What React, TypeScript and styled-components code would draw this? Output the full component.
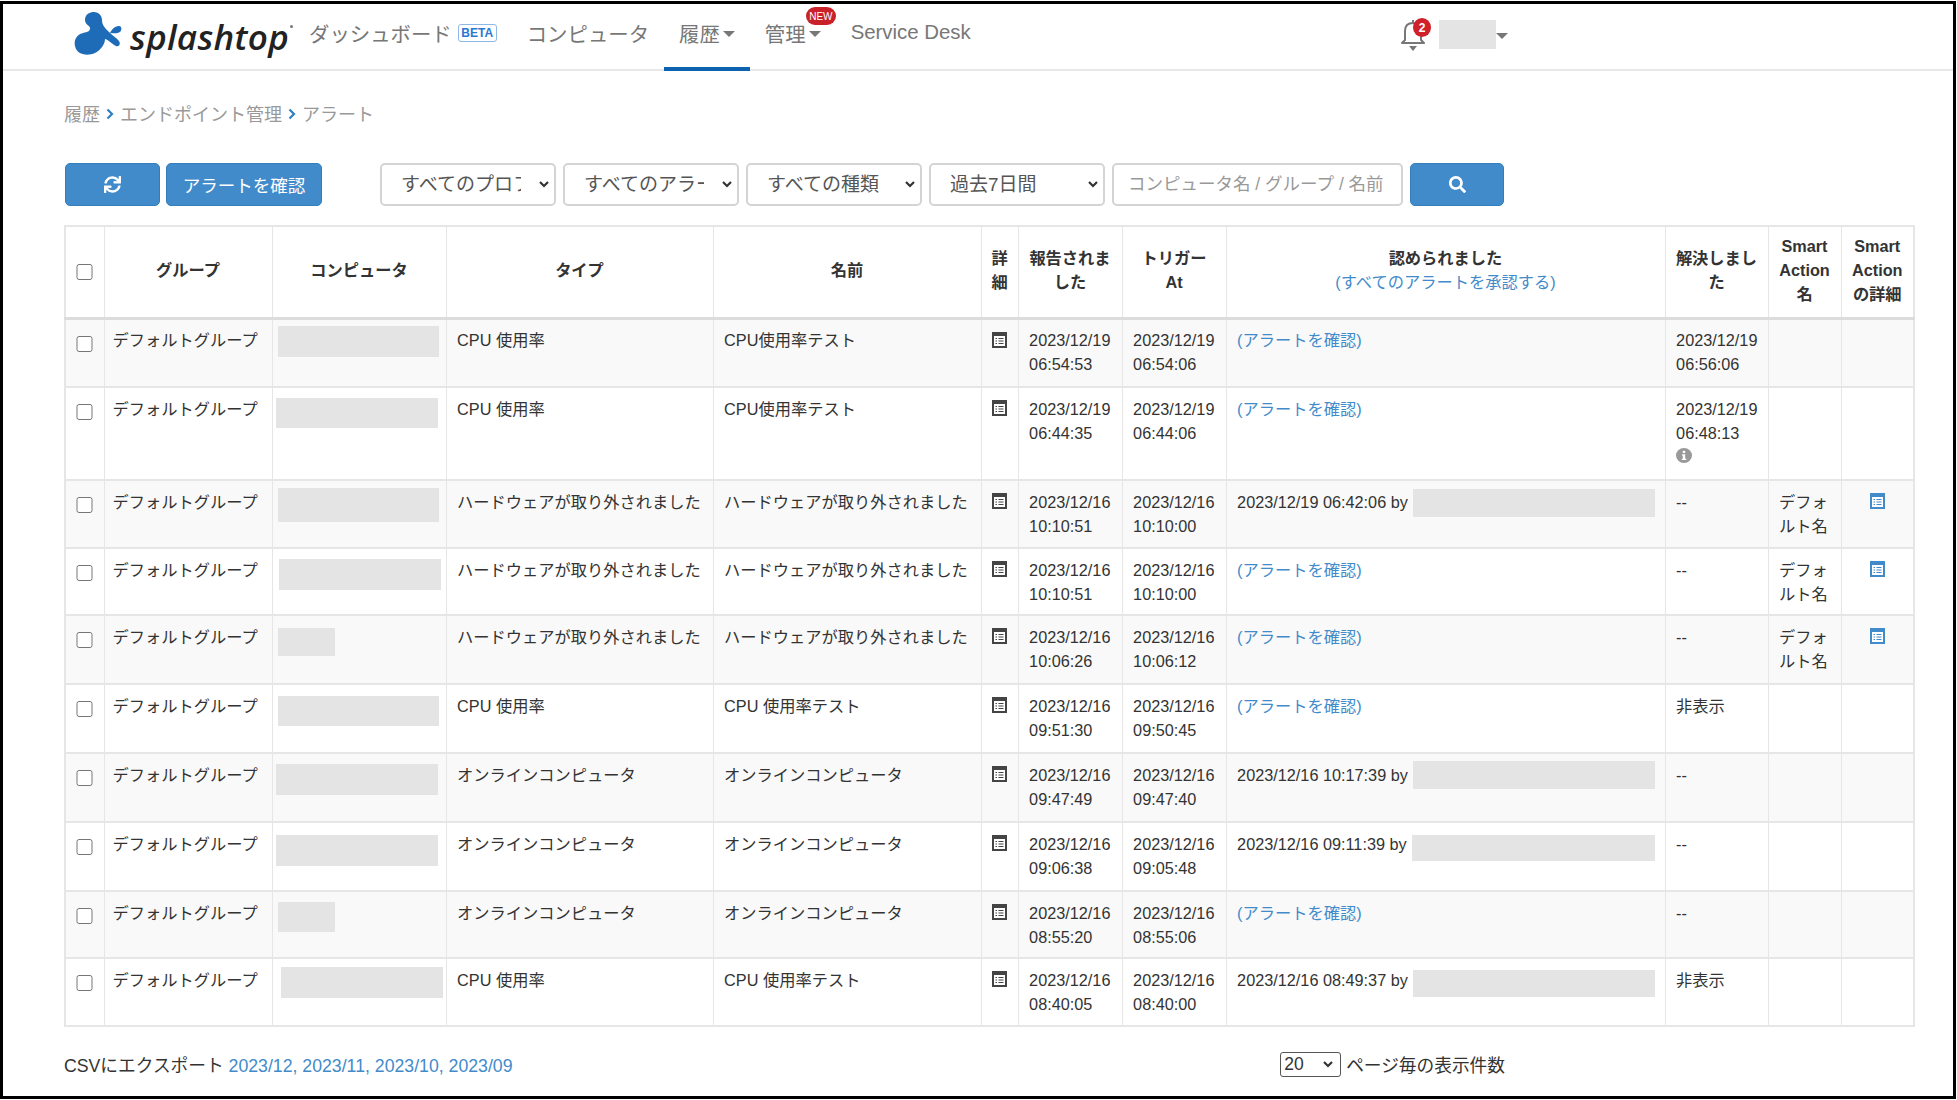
import { Fragment } from "react";
import styled, { createGlobalStyle } from "styled-components";
import { FaSearch, FaSync } from "react-icons/fa";

type Ack = { link: true } | { by: string; top: number; height: number };

interface AlertRow {
  height: number;
  box: { x: number; y: number; w: number; h: number };
  type: string;
  name: string;
  reported: string[];
  trigger: string[];
  ack: Ack;
  resolved: string[];
  info?: boolean;
  smart?: boolean;
}

const HW = "ハードウェアが取り外されました";
const ONLINE = "オンラインコンピュータ";

const rows: AlertRow[] = [
  { height: 69, box: { x: 5, y: 6, w: 161, h: 31 }, type: "CPU 使用率", name: "CPU使用率テスト", reported: ["2023/12/19", "06:54:53"], trigger: ["2023/12/19", "06:54:06"], ack: { link: true }, resolved: ["2023/12/19", "06:56:06"] },
  { height: 93, box: { x: 3, y: 10, w: 162, h: 30 }, type: "CPU 使用率", name: "CPU使用率テスト", reported: ["2023/12/19", "06:44:35"], trigger: ["2023/12/19", "06:44:06"], ack: { link: true }, resolved: ["2023/12/19", "06:48:13"], info: true },
  { height: 68, box: { x: 5, y: 7, w: 161, h: 34 }, type: HW, name: HW, reported: ["2023/12/16", "10:10:51"], trigger: ["2023/12/16", "10:10:00"], ack: { by: "2023/12/19 06:42:06 by", top: -1, height: 28 }, resolved: ["--"], smart: true },
  { height: 67, box: { x: 6, y: 10, w: 162, h: 31 }, type: HW, name: HW, reported: ["2023/12/16", "10:10:51"], trigger: ["2023/12/16", "10:10:00"], ack: { link: true }, resolved: ["--"], smart: true },
  { height: 69, box: { x: 5, y: 12, w: 57, h: 28 }, type: HW, name: HW, reported: ["2023/12/16", "10:06:26"], trigger: ["2023/12/16", "10:06:12"], ack: { link: true }, resolved: ["--"], smart: true },
  { height: 69, box: { x: 5, y: 11, w: 161, h: 30 }, type: "CPU 使用率", name: "CPU 使用率テスト", reported: ["2023/12/16", "09:51:30"], trigger: ["2023/12/16", "09:50:45"], ack: { link: true }, resolved: ["非表示"] },
  { height: 69, box: { x: 3, y: 10, w: 162, h: 31 }, type: ONLINE, name: ONLINE, reported: ["2023/12/16", "09:47:49"], trigger: ["2023/12/16", "09:47:40"], ack: { by: "2023/12/16 10:17:39 by", top: -2, height: 28 }, resolved: ["--"] },
  { height: 69, box: { x: 3, y: 12, w: 162, h: 31 }, type: ONLINE, name: ONLINE, reported: ["2023/12/16", "09:06:38"], trigger: ["2023/12/16", "09:05:48"], ack: { by: "2023/12/16 09:11:39 by", top: 3, height: 26 }, resolved: ["--"] },
  { height: 67, box: { x: 5, y: 10, w: 57, h: 30 }, type: ONLINE, name: ONLINE, reported: ["2023/12/16", "08:55:20"], trigger: ["2023/12/16", "08:55:06"], ack: { link: true }, resolved: ["--"] },
  { height: 68, box: { x: 8, y: 8, w: 162, h: 31 }, type: "CPU 使用率", name: "CPU 使用率テスト", reported: ["2023/12/16", "08:40:05"], trigger: ["2023/12/16", "08:40:00"], ack: { by: "2023/12/16 08:49:37 by", top: 2, height: 27 }, resolved: ["非表示"] },
];

const columns = [39, 168, 174, 267, 268, 37, 104, 104, 439, 103, 73, 73];
const exportMonths = ["2023/12", "2023/11", "2023/10", "2023/09"];

// select arrow, a bold chevron like the one in the picture
const ARROW = `url("data:image/svg+xml,%3Csvg xmlns='http://www.w3.org/2000/svg' width='10' height='7'%3E%3Cpath d='M1 1l4 4 4-4' fill='none' stroke='%23333' stroke-width='2.2'/%3E%3C/svg%3E")`;

const DetailIcon = ({ color }: { color: string }) => (
  <svg width="15" height="16" viewBox="0 0 15 16">
    <rect x="1" y="1" width="13" height="14" fill="#fff" stroke={color} strokeWidth="2" />
    <rect x="1" y="1" width="13" height="3" fill={color} />
    <path d="M3.5 6.5h1.5M6.5 6.5h5M3.5 9h1.5M6.5 9h5M3.5 11.5h1.5M6.5 11.5h5" stroke={color} strokeWidth="1.2" />
  </svg>
);

const InfoIcon = () => (
  <svg width="16" height="15" viewBox="0 0 16 15">
    <ellipse cx="8" cy="7.5" rx="8" ry="7.5" fill="#999" />
    <rect x="6.8" y="2.8" width="2.4" height="2.2" fill="#fff" />
    <path d="M6 6.2h3.2v4.6H10.4v1.2H5.8v-1.2h1v-3.4H6z" fill="#fff" />
  </svg>
);

const LogoMark = () => (
  <LogoSvg width="48" height="44" viewBox="0 0 48 44">
    <path
      d="M11 8C11 2 16 0 20 0C25 0 28 4 28 8C28 13 31 16 35 20C39 24 43 26 45 29C47 32 45 35 42 34C38 32 35 28 31 27C31 32 27 38 21 41C14 44 5 43 2 37C-1 31 1 25 6 22C10 20 15 21 16 17C17 14 11 13 11 8Z"
      fill="#1e6cb8"
    />
    <path d="M36 21C38 17 41 14 45 14C48 14 48 18 46 20C43 22 40 21 36 21Z" fill="#1e6cb8" />
  </LogoSvg>
);

const BellIcon = () => (
  <svg width="24" height="33" viewBox="0 0 24 33">
    <path
      d="M12 2v3M4 22V13C4 8 7 5 12 5s8 3 8 8v9l3 3H1z"
      fill="none"
      stroke="#777"
      strokeWidth="2"
      strokeLinejoin="round"
    />
    <path d="M8 28h8l-4 5z" fill="#777" />
  </svg>
);

const Chevron = () => (
  <ChevronMark width="8" height="12" viewBox="0 0 8 12">
    <path d="M1.5 1.5 6 6l-4.5 4.5" fill="none" stroke="#2f7fc4" strokeWidth="2.2" />
  </ChevronMark>
);

const App = () => {
  return <Frame>
    <GlobalStyle />
    <Header>
      <Logo>
        <LogoMark />
        <LogoText>splashtop</LogoText>
        <LogoDot />
      </Logo>
      <NavItem>ダッシュボード<BetaBadge>BETA</BetaBadge></NavItem>
      <NavItem>コンピュータ</NavItem>
      <NavItem $active>履歴<Caret /></NavItem>
      <NavItem>管理<Caret /><NewBadge>NEW</NewBadge></NavItem>
      <NavItem>Service Desk</NavItem>
      <UserArea>
        <Bell>
          <BellIcon />
          <BellCount>2</BellCount>
        </Bell>
        <UserName />
        <UserCaret />
      </UserArea>
    </Header>

    <Main>
      <Breadcrumb>
        <span>履歴</span><Chevron />
        <span>エンドポイント管理</span><Chevron />
        <span>アラート</span>
      </Breadcrumb>

      <Toolbar>
        <PrimaryButton $width={95}><FaSync size={17} /></PrimaryButton>
        <PrimaryButton $width={156}>アラートを確認</PrimaryButton>
        <Filters>
          <FilterSelect defaultValue="product"><option value="product">すべてのプロファイル</option></FilterSelect>
          <FilterSelect defaultValue="alert"><option value="alert">すべてのアラート</option></FilterSelect>
          <FilterSelect defaultValue="kind"><option value="kind">すべての種類</option></FilterSelect>
          <FilterSelect defaultValue="7d"><option value="7d">過去7日間</option></FilterSelect>
          <SearchInput placeholder="コンピュータ名 / グループ / 名前" />
          <PrimaryButton $width={94}><FaSearch size={17} /></PrimaryButton>
        </Filters>
      </Toolbar>

      <Table>
        <colgroup>
          {columns.map((w, i) => <col key={i} style={{ width: w }} />)}
        </colgroup>
        <thead>
          <HeadRow>
            <HeadCell $tight><Check type="checkbox" /></HeadCell>
            <HeadCell>グループ</HeadCell>
            <HeadCell>コンピュータ</HeadCell>
            <HeadCell>タイプ</HeadCell>
            <HeadCell>名前</HeadCell>
            <HeadCell $tight>詳<br />細</HeadCell>
            <HeadCell>報告されました</HeadCell>
            <HeadCell>トリガー At</HeadCell>
            <HeadCell>認められました<br /><HeadLink>(すべてのアラートを承認する)</HeadLink></HeadCell>
            <HeadCell>解決しました</HeadCell>
            <HeadCell>Smart Action 名</HeadCell>
            <HeadCell>Smart Action の詳細</HeadCell>
          </HeadRow>
        </thead>
        <tbody>
          {rows.map((row, i) => (
            <BodyRow key={i} $height={row.height}>
              <CheckCell><Check type="checkbox" /></CheckCell>
              <Cell $tightLeft>デフォルトグループ</Cell>
              <BoxCell>
                <Redacted $x={row.box.x} $y={row.box.y} $w={row.box.w} $h={row.box.h} />
              </BoxCell>
              <Cell>{row.type}</Cell>
              <Cell>{row.name}</Cell>
              <IconCell><DetailIcon color="#444" /></IconCell>
              <Cell>{row.reported.map(t => <Fragment key={t}>{t}<br /></Fragment>)}</Cell>
              <Cell>{row.trigger.map(t => <Fragment key={t}>{t}<br /></Fragment>)}</Cell>
              <Cell>
                {"link" in row.ack
                  ? <Link>(アラートを確認)</Link>
                  : <AckLine>
                      <span>{row.ack.by}</span>
                      <AckName $top={row.ack.top} $h={row.ack.height} />
                    </AckLine>}
              </Cell>
              <Cell>
                {row.resolved.map(t => <Fragment key={t}>{t}<br /></Fragment>)}
                {row.info && <InfoRow><InfoIcon /></InfoRow>}
              </Cell>
              <Cell>{row.smart && "デフォルト名"}</Cell>
              <IconCell>{row.smart && <DetailIcon color="#428bca" />}</IconCell>
            </BodyRow>
          ))}
        </tbody>
      </Table>

      <Footer>
        <div>
          CSVにエクスポート{" "}
          {exportMonths.map((m, i) => <Fragment key={m}>{i > 0 && <Link>, </Link>}<Link>{m}</Link></Fragment>)}
        </div>
        <PageSize>
          <PageSelect defaultValue="20"><option value="20">20</option></PageSelect>
          <span>ページ毎の表示件数</span>
        </PageSize>
      </Footer>
    </Main>
  </Frame>
}

export default App;

const FONT = `"Liberation Sans", "Noto Sans CJK JP", sans-serif`;

const GlobalStyle = createGlobalStyle`
  html, body {
    margin: 0;
    background: #fff;
    font-family: ${FONT};
  }
`

const Frame = styled.div`
  box-sizing: border-box;
  width: 1956px;
  height: 1098px;
  margin-top: 1px;
  border: 3px solid #000;
  overflow: hidden;
  color: #333;
`

const Header = styled.header`
  display: flex;
  align-items: stretch;
  height: 67px;
  padding: 0 445px 0 71px;
  border-bottom: 2px solid #e8e8e8;
  box-sizing: border-box;
`
const Logo = styled.div`
  position: relative;
  display: flex;
  align-items: center;
  width: 220px;
  gap: 8px;
`
const LogoSvg = styled.svg`
  flex-shrink: 0;
  margin-top: -5px;
`
const LogoText = styled.span`
  margin-top: -1px;
  font-family: "Open Sans", sans-serif;
  font-size: 35px;
  font-style: italic;
  font-weight: 600;
  letter-spacing: 0.3px;
  color: #222;
`
const LogoDot = styled.i`
  position: absolute;
  left: 216px;
  top: 21px;
  width: 3px;
  height: 3px;
  border-radius: 50%;
  background: #777;
`
const NavItem = styled.div<{ $active?: boolean }>`
  position: relative;
  display: flex;
  align-items: center;
  padding: 0 15px 6px;
  font-size: 20.4px;
  color: #777;
  border-bottom: 4px solid ${p => (p.$active ? "#0d62b0" : "transparent")};
  margin-bottom: -2px;
`
const BetaBadge = styled.span`
  display: inline-flex;
  align-items: center;
  justify-content: center;
  box-sizing: border-box;
  width: 39px;
  height: 18px;
  margin-left: 6px;
  border: 1.5px solid #8db8e8;
  border-radius: 3px;
  font-size: 12px;
  font-weight: 700;
  color: #2a78d0;
`
const NewBadge = styled.span`
  position: absolute;
  left: 56px;
  top: 3px;
  display: flex;
  align-items: center;
  justify-content: center;
  width: 30px;
  height: 18px;
  border-radius: 9px;
  background: #c9202a;
  color: #fff;
  font-size: 10px;
`
const Caret = styled.i`
  display: inline-block;
  width: 0;
  height: 0;
  margin-left: 3px;
  margin-top: 3px;
  border-top: 6px solid #777;
  border-left: 6px solid transparent;
  border-right: 6px solid transparent;
`
const UserCaret = styled(Caret)`
  margin-left: 0;
`
const UserArea = styled.div`
  display: flex;
  align-items: center;
  margin-left: auto;
  padding-bottom: 5px;
`
const Bell = styled.div`
  position: relative;
  display: flex;
  margin-right: 14px;
  margin-top: 1px;
`
const BellCount = styled.span`
  position: absolute;
  left: 12px;
  top: 0;
  display: flex;
  align-items: center;
  justify-content: center;
  width: 18px;
  height: 19px;
  border-radius: 50%;
  background: #d0202a;
  color: #fff;
  font-size: 12px;
  font-weight: 700;
`
const UserName = styled.div`
  width: 57px;
  height: 29px;
  background: #e4e4e4;
`

const Main = styled.main`
  padding: 30px 0 0 61px;
`
const Breadcrumb = styled.nav`
  display: flex;
  align-items: center;
  height: 24px;
  gap: 6px;
  font-size: 18px;
  color: #999;
`
const ChevronMark = styled.svg`
  flex-shrink: 0;
  margin-top: 2px;
`
const Toolbar = styled.div`
  display: flex;
  align-items: center;
  height: 43px;
  margin-top: 38px;
  padding-left: 1px;
  gap: 6px;
`
const Filters = styled.div`
  display: flex;
  align-items: center;
  gap: 7px;
  margin-left: 52px;
`
const PrimaryButton = styled.button<{ $width: number }>`
  display: flex;
  align-items: center;
  justify-content: center;
  box-sizing: border-box;
  width: ${p => p.$width}px;
  height: 43px;
  padding: 0;
  border: 1px solid #357ebd;
  border-radius: 5px;
  background: #428bca;
  color: #fff;
  font-family: ${FONT};
  font-size: 17.5px;
`
const FilterSelect = styled.select`
  box-sizing: border-box;
  appearance: none;
  width: 176px;
  height: 43px;
  padding: 0 33px 0 19px;
  border: 2px solid #d4d4d4;
  border-radius: 5px;
  background: #fff ${ARROW} no-repeat right 5px center;
  color: #555;
  font-family: ${FONT};
  font-size: 19px;
`
const SearchInput = styled.input`
  box-sizing: border-box;
  width: 291px;
  height: 43px;
  padding: 0 14px;
  border: 2px solid #d4d4d4;
  border-radius: 5px;
  font-family: ${FONT};
  font-size: 17.5px;
  &::placeholder {
    color: #999;
  }
`

const Table = styled.table`
  table-layout: fixed;
  width: 1849px;
  margin-top: 19px;
  border-collapse: collapse;
  font-size: 16.25px;
  line-height: 24px;
  border: 2px solid #e6e6e6;
`
const HeadRow = styled.tr`
  height: 92px;
`
const HeadCell = styled.th<{ $tight?: boolean }>`
  padding: 0 ${p => (p.$tight ? 0 : 10)}px 3px;
  border: 1px solid #e6e6e6;
  border-bottom: 3px solid #dcdcdc;
  text-align: center;
  vertical-align: middle;
  font-weight: 700;
  color: #333;
`
const HeadLink = styled.span`
  font-weight: 400;
  color: #428bca;
`
const BodyRow = styled.tr<{ $height: number }>`
  height: ${p => p.$height}px;
  &:nth-child(odd) {
    background: #f9f9f9;
  }
`
const Cell = styled.td<{ $tightLeft?: boolean }>`
  padding: 8.5px 10px 0 ${p => (p.$tightLeft ? 8 : 10.6)}px;
  border: 1px solid #e6e6e6;
  border-bottom-width: 2px;
  vertical-align: top;
  word-break: normal;
`
const CheckCell = styled(Cell)`
  padding: 16px 0 0;
  text-align: center;
  line-height: 0;
`
const BoxCell = styled(Cell)`
  padding: 0;
`
const IconCell = styled(Cell)`
  padding: 12px 0 0;
  text-align: center;
  line-height: 0;
`
const Check = styled.input`
  width: 17px;
  height: 16px;
  margin: 0;
  vertical-align: middle;
`
const Redacted = styled.div<{ $x: number; $y: number; $w: number; $h: number }>`
  width: ${p => p.$w}px;
  height: ${p => p.$h}px;
  margin: ${p => p.$y}px 0 0 ${p => p.$x}px;
  background: #e4e4e4;
`
const Link = styled.span`
  color: #428bca;
`
const AckLine = styled.div`
  display: flex;
  align-items: flex-start;
  gap: 5px;
  white-space: nowrap;
`
const AckName = styled.div<{ $top: number; $h: number }>`
  width: 247px;
  height: ${p => p.$h}px;
  margin-top: ${p => p.$top}px;
  background: #e4e4e4;
`
const InfoRow = styled.div`
  display: flex;
  margin-top: 3px;
`

const Footer = styled.div`
  display: flex;
  justify-content: space-between;
  align-items: center;
  box-sizing: border-box;
  width: 1849px;
  height: 26px;
  margin: 24px 0 0;
  padding-right: 408px;
  font-size: 17.7px;
`
const PageSize = styled.div`
  display: flex;
  align-items: center;
  gap: 5px;
`
const PageSelect = styled.select`
  box-sizing: border-box;
  appearance: none;
  width: 61px;
  height: 25px;
  padding: 0 0 0 3px;
  border: 1px solid #555;
  border-radius: 3px;
  background: #fff ${ARROW} no-repeat right 7px center;
  color: #333;
  font-family: ${FONT};
  font-size: 17.5px;
`
